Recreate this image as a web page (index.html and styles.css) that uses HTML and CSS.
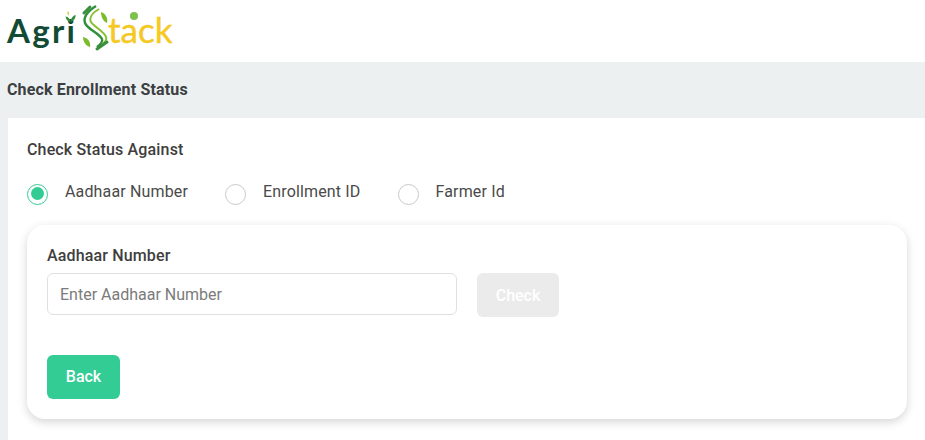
FILE: index.html
```html
<!DOCTYPE html>
<html lang="en">
<head>
<meta charset="utf-8">
<title>Check Enrollment Status</title>
<link rel="stylesheet" href="styles.css">
</head>
<body>
<header class="topbar">
  <div class="logo">
    <span class="logo-agri">Agr<span class="logo-i">i<svg class="logo-sprout" viewBox="0 0 10 10" aria-hidden="true"><path d="M5 10C4.600 7 3 5.400 .5 5c.3 2.800 2 4.500 4.500 5z" fill="#2f8f3a"/><path d="M5 10c.2-3 1.800-5 4.500-6.500.4 3-1 5.300-4.500 6.500z" fill="#2f8f3a"/><path d="M3 4C2 3 2 1.500 2.500 0c1.300 1 1.500 2.500.5 4z" fill="#c4cf3a"/></svg></span></span>
    <svg class="logo-s" viewBox="0 0 30 50" aria-hidden="true">
      <path d="M4 9 10 3" stroke="#3b8f3c" stroke-width="3" stroke-linecap="round" fill="none"/>
      <path d="M16 2C8 7 3 13 5 19c2 6 14 10 17 16 1 3-1 5-5 8" stroke="#2f8f3a" stroke-width="2.400" fill="none"/>
      <path d="M19 5C12 9 9 14 11 18c3 5 13 9 15 15 1 2 0 4-3 7" stroke="#86bf2e" stroke-width="2" fill="none"/>
      <path d="M21 8c5 2 7 6 6 11-4-2-6-6-6-11z" fill="#7dbb2e"/>
      <path d="M3 33c5 1 8 5 7 10-4-1-7-5-7-10z" fill="#7dbb2e"/>
      <path d="M17 45 27 38" stroke="#3b8f3c" stroke-width="3" stroke-linecap="round" fill="none"/>
    </svg>
    <span class="logo-tack">t<span class="logo-a">a<span class="logo-dot"></span></span>ck</span>
  </div>
</header>
<main class="page">
  <div class="page-head">Check Enrollment Status</div>
  <section class="panel">
    <h2 class="panel-title">Check Status Against</h2>
    <div class="radios">
      <label class="radio radio-on"><span class="dot"></span>Aadhaar Number</label>
      <label class="radio"><span class="dot"></span>Enrollment ID</label>
      <label class="radio"><span class="dot"></span>Farmer Id</label>
    </div>
    <div class="card">
      <label class="field-label" for="aadhaar">Aadhaar Number</label>
      <div class="field-row">
        <input class="field-input" id="aadhaar" type="text" placeholder="Enter Aadhaar Number">
        <button class="btn btn-off" type="button">Check</button>
      </div>
      <button class="btn btn-back" type="button">Back</button>
    </div>
  </section>
</main>
</body>
</html>
```

FILE: styles.css
```css
* { box-sizing: border-box; }
html, body { margin: 0; height: 100%; }
body {
  width: 925px;
  height: 440px;
  overflow: hidden;
  background: #fff;
  font-family: Roboto, "Liberation Sans", sans-serif;
  color: #3e3e3e;
}
.topbar { height: 62px; padding: 4px 0 0 7px; }
.logo { display: flex; align-items: flex-start; height: 50px; }
.logo-agri {
  font-family: Lato, "Open Sans", sans-serif;
  font-weight: 700;
  font-size: 33px;
  line-height: 1;
  letter-spacing: 2.300px;
  color: #124a33;
  width: 73px;
  margin-top: 10px;
}
.logo-i { position: relative; }
.logo-sprout { position: absolute; left: -2px; top: 1px; width: 11px; height: 11px; }
.logo-s { width: 30px; height: 50px; flex: none; }
.logo-tack {
  font-family: Lato, "Open Sans", sans-serif;
  font-size: 35px;
  line-height: 1;
  color: #f5c823;
  -webkit-text-stroke: .4px #f5c823;
  margin-top: 8px;
  margin-left: -2px;
}
.logo-a { position: relative; }
.logo-dot {
  position: absolute;
  left: 9px;
  top: 4px;
  width: 8px;
  height: 8px;
  border-radius: 50%;
  background: #7cc24a;
}
.page { background: #edf0f1; height: 378px; padding: 0 0 0 8px; }
.page-head {
  height: 56px;
  padding-bottom: 2px;
  display: flex;
  align-items: center;
  font-size: 16px;
  font-weight: 700;
  letter-spacing: .15px;
  color: #3c3f41;
  margin-left: -1px;
}
.panel { background: #fff; height: 322px; padding: 22px 18px 0 19px; }
.panel-title { margin: 0; font-size: 16px; font-weight: 500; line-height: 20px; letter-spacing: .15px; color: #3e3e3e; }
.radios { display: flex; margin-top: 19px; height: 24px; align-items: center; }
.radio { display: flex; align-items: center; font-size: 16px; letter-spacing: .15px; color: #4a4a4a; margin-right: 37px; }
.dot {
  width: 21px;
  height: 21px;
  border: 1px solid #c9c9c9;
  border-radius: 50%;
  margin-right: 17px;
  position: relative;
  top: 3px;
  background: #fff;
}
.radio-on .dot { border: 1.500px solid #33cc95; }
.radio-on .dot::after {
  content: "";
  display: block;
  margin: 2.500px;
  width: 13px;
  height: 13px;
  border-radius: 50%;
  background: #33cc95;
}
.card {
  margin-top: 22px;
  height: 194px;
  background: #fff;
  border-radius: 18px;
  box-shadow: 0 3px 10px rgba(0,0,0,.17);
  padding: 21px 20px 0;
}
.field-label { display: block; font-size: 16px; font-weight: 500; line-height: 20px; letter-spacing: .15px; color: #3e3e3e; }
.field-row { display: flex; margin-top: 7px; align-items: flex-start; }
.field-input {
  width: 410px;
  height: 42px;
  border: 1px solid #e0e0e0;
  border-radius: 6px;
  padding: 0 12px;
  font: 16px Roboto, sans-serif;
  color: #4a4a4a;
  outline: none;
  background: #fff;
}
.field-input::placeholder { color: #7b7b7b; opacity: 1; }
.btn {
  border: 0;
  border-radius: 6px;
  color: #fff;
  font: 500 16px Roboto, sans-serif;
  padding: 0 0 1px;
}
.btn-off { width: 82px; height: 44px; margin-left: 20px; background: #ebebeb; padding-bottom: 0; }
.btn-back { display: block; width: 73px; height: 44px; margin-top: 38px; background: #33cc95; }
```
